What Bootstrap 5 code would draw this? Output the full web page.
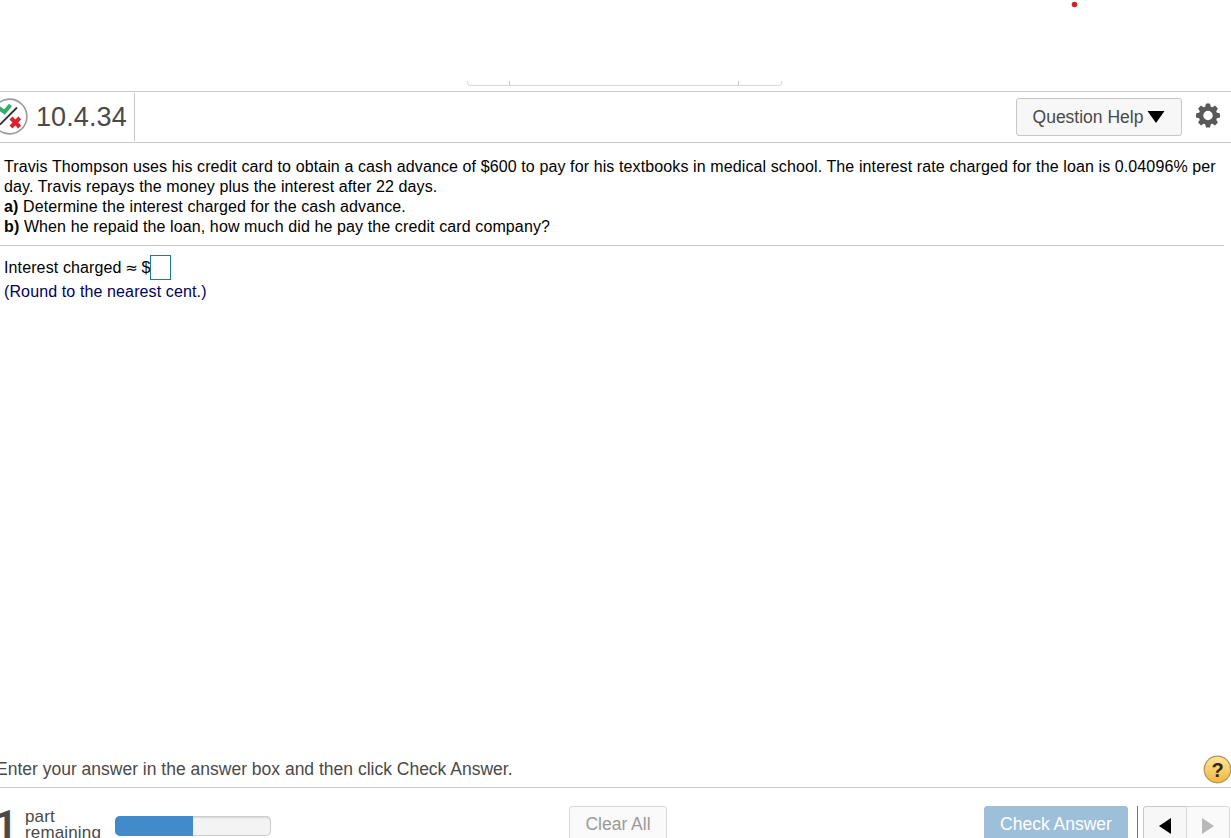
<!DOCTYPE html>
<html lang="en">

<head>
    <meta charset="UTF-8">
    <meta name="viewport" content="width=device-width, initial-scale=1.0">
    <title>Homework - Question 10.4.34</title>
    <link href="https://cdn.jsdelivr.net/npm/bootstrap@5.3.0/dist/css/bootstrap.min.css" rel="stylesheet">
    <style>
        body {
            font-family: "Liberation Sans", Arial, sans-serif;
            color: #4a4a4a;
            height: 838px;
        }

        /* Top strip with the lower edge of the question navigator */
        .top-strip {
            height: 91px;
        }

        .pager-edge {
            width: 315px;
            height: 5px;
            margin: 0 0 5px 467px;
            border: 1px solid #d8d8d8;
            border-top: 0;
            border-radius: 0 0 4px 4px;
        }

        .pager-edge .edge-cell {
            border-right: 1px solid #c4c4c4;
        }

        .edge-first {
            width: 42px;
        }

        .edge-middle {
            width: 229px;
        }

        .red-dot {
            top: 1px;
            left: 1071px;
        }

        /* Header */
        .question-bar {
            height: 52px;
            border-top: 1px solid #c6c9cb;
            border-bottom: 1px solid #c6c9cb;
        }

        .question-id {
            width: 135px;
            height: 48px;
            border-right: 1px solid #c6c9cb;
        }

        .question-number {
            font-size: 27px;
            line-height: 46px;
            margin-left: 8px;
            letter-spacing: .1px;
        }

        .btn-tool {
            --bs-btn-color: #4a4a4a;
            --bs-btn-bg: #f7f7f7;
            --bs-btn-border-color: #c6c6c6;
            --bs-btn-disabled-color: #9a9a9a;
            --bs-btn-disabled-bg: #fafafa;
            --bs-btn-disabled-border-color: #d8d8d8;
            --bs-btn-disabled-opacity: 1;
            --bs-btn-border-radius: 3px;
            --bs-btn-font-size: 17.5px;
            --bs-btn-line-height: 24px;
        }

        .btn-help {
            width: 166px;
            height: 38px;
            margin-right: 14px;
        }

        /* Question text */
        .question-text {
            color: #000;
            font-size: 16px;
            line-height: 20px;
            letter-spacing: .11px;
            padding: 14px 0 8px 4px;
            margin-right: 7px;
            border-bottom: 1px solid #c6c9cb;
        }

        .text-line {
            white-space: nowrap;
        }

        .answer-area {
            color: #000;
            font-size: 16px;
            line-height: 20px;
            letter-spacing: .12px;
            padding: 9px 0 0 4px;
        }

        .approx {
            font-family: "DejaVu Sans", sans-serif;
            font-size: 15px;
            line-height: 1;
            margin: 0 -1px;
        }

        .answer-box {
            width: 21px;
            height: 25px;
            border: 1px solid #1f7a99;
            border-radius: 0;
            outline: 0;
        }

        .round-note {
            color: #00005c;
            margin-top: 2px;
        }

        /* Instruction line */
        .instruction {
            height: 37px;
            font-size: 17.5px;
            line-height: 36px;
            border-bottom: 1px solid #c6c9cb;
        }

        .instruction-text {
            margin-left: -4px;
        }

        /* Footer */
        .footer-bar {
            height: 50px;
            padding-top: 18px;
        }

        .parts-count {
            width: 18px;
            font-family: Roboto, sans-serif;
            font-size: 38px;
            line-height: 38px;
            margin-left: -5px;
        }

        .parts-label {
            width: 90px;
            font-size: 17px;
            line-height: 16px;
            letter-spacing: .15px;
            margin-left: 12px;
            padding-top: 3px;
        }

        .parts-progress {
            width: 156px;
            height: 20px;
            margin-top: 10px;
            background: #f3f3f3;
            border-radius: 5px;
            box-shadow: inset 0 0 0 1px #ccc, inset 0 2px 2px rgba(0, 0, 0, .12);
        }

        .parts-progress .progress-bar {
            background: #428bca;
        }

        .btn-clear {
            width: 98px;
            height: 38px;
            padding-bottom: 2px;
            margin-left: 298px;
        }

        .btn-submit {
            --bs-btn-disabled-color: #fff;
            --bs-btn-disabled-bg: #9dbfda;
            --bs-btn-disabled-border-color: #9dbfda;
            width: 144px;
            height: 38px;
            padding-bottom: 2px;
        }

        .footer-divider {
            width: 1px;
            height: 38px;
            background: #777;
            margin: 0 5px 0 9px;
        }

        .step-group {
            margin-right: 1px;
        }

        .btn-step {
            width: 44px;
            height: 38px;
        }
    </style>
</head>

<body class="d-flex flex-column overflow-hidden position-relative bg-white">
    <!-- Top strip -->
    <div class="top-strip d-flex flex-column justify-content-end flex-shrink-0">
        <div class="pager-edge d-flex">
            <div class="edge-cell edge-first"></div>
            <div class="edge-cell edge-middle"></div>
        </div>
        <svg class="red-dot position-absolute" width="7" height="7" viewBox="0 0 7 7">
            <circle cx="3.5" cy="3.5" r="2.8" fill="#cf2026" />
        </svg>
    </div>

    <!-- Header -->
    <header class="question-bar d-flex align-items-center justify-content-between flex-shrink-0">
        <div class="question-id d-flex align-items-center">
            <svg width="28" height="38" viewBox="0 0 28 38" class="flex-shrink-0">
                <circle cx="9.5" cy="18.5" r="17.4" fill="#fff" stroke="#9a9a9a" stroke-width="1.6" />
                <path d="M-1 10 4.500 14 10.500 7" fill="none" stroke="#35ad68" stroke-width="4" />
                <path d="M0 26.500 17 9.500" stroke="#333" stroke-width="1.8" />
                <path d="M11 20 19.700 29M19.700 20 11 29" stroke="#d8232a" stroke-width="4" />
            </svg>
            <div class="question-number">10.4.34</div>
        </div>
        <div class="d-flex align-items-center">
            <button type="button" class="btn btn-tool btn-help d-flex align-items-center justify-content-center gap-1 p-0">
                <span>Question Help</span>
                <svg width="18" height="12" viewBox="0 0 18 12">
                    <path d="M.5 0H17.500L9 12z" fill="#000" />
                </svg>
            </button>
            <svg class="gear" width="35" height="36" viewBox="0 0 35 36">
                <g transform="translate(12 16.500)" fill="#595959">
                    <circle r="7" fill="none" stroke="#595959" stroke-width="4.5" />
                    <g id="teeth">
                        <path d="M-3-8-2-12H2L3-8zM-3 8-2 12H2L3 8zM-8-3-12-2V2L-8 3zM8-3 12-2V2L8 3z" />
                    </g>
                    <use href="#teeth" transform="rotate(45)" />
                </g>
            </svg>
        </div>
    </header>

    <!-- Question -->
    <main class="flex-grow-1">
        <div class="question-text">
            <div class="text-line">Travis Thompson uses his credit card to obtain a cash advance of $600 to pay for his textbooks in medical school. The interest rate charged for the loan is 0.04096% per</div>
            <div class="text-line">day. Travis repays the money plus the interest after 22 days.</div>
            <div class="text-line"><b>a)</b> Determine the interest charged for the cash advance.</div>
            <div class="text-line"><b>b)</b> When he repaid the loan, how much did he pay the credit card company?</div>
        </div>
        <div class="answer-area">
            <div class="d-flex align-items-center">
                <label for="interest" class="text-nowrap">Interest charged <span class="approx">≈</span> $</label>
                <input type="text" id="interest" class="answer-box p-0">
            </div>
            <div class="round-note">(Round to the nearest cent.)</div>
        </div>
    </main>

    <!-- Instruction -->
    <div class="instruction d-flex justify-content-between flex-shrink-0">
        <div class="instruction-text">Enter your answer in the answer box and then click Check Answer.</div>
        <svg width="28" height="36" viewBox="0 0 28 36">
            <defs>
                <linearGradient id="gold" x1="0" y1="0" x2="0" y2="1">
                    <stop offset="0" stop-color="#ffe59a" />
                    <stop offset="1" stop-color="#edb83f" />
                </linearGradient>
            </defs>
            <circle cx="14.500" cy="18.500" r="13.300" fill="url(#gold)" stroke="#b3925a" stroke-width="1.2" />
            <text x="14.500" y="25.500" text-anchor="middle" font-size="20" font-weight="700" fill="#332614">?</text>
        </svg>
    </div>

    <!-- Footer -->
    <footer class="footer-bar d-flex align-items-start justify-content-between flex-shrink-0">
        <div class="d-flex align-items-start">
            <div class="parts-count fw-bold">1</div>
            <div class="parts-label">part<br>remaining</div>
            <div class="progress parts-progress">
                <div class="progress-bar" style="width: 50%"></div>
            </div>
            <button type="button" class="btn btn-tool btn-clear px-0 pt-0" disabled>Clear All</button>
        </div>
        <div class="d-flex align-items-start">
            <button type="button" class="btn btn-tool btn-submit px-0 pt-0" disabled>Check Answer</button>
            <div class="footer-divider"></div>
            <div class="btn-group step-group">
                <button type="button" class="btn btn-tool btn-step p-0" aria-label="Previous">
                    <svg width="12" height="16" viewBox="0 0 12 16">
                        <path d="M12 0V16L0 8z" fill="#000" />
                    </svg>
                </button>
                <button type="button" class="btn btn-tool btn-step p-0" aria-label="Next" disabled>
                    <svg width="12" height="16" viewBox="0 0 12 16">
                        <path d="M0 0V16L12 8z" fill="#b8b8b8" />
                    </svg>
                </button>
            </div>
        </div>
    </footer>

    <!-- Bootstrap JS -->
    <script src="https://cdn.jsdelivr.net/npm/bootstrap@5.3.0/dist/js/bootstrap.bundle.min.js"></script>
</body>

</html>
